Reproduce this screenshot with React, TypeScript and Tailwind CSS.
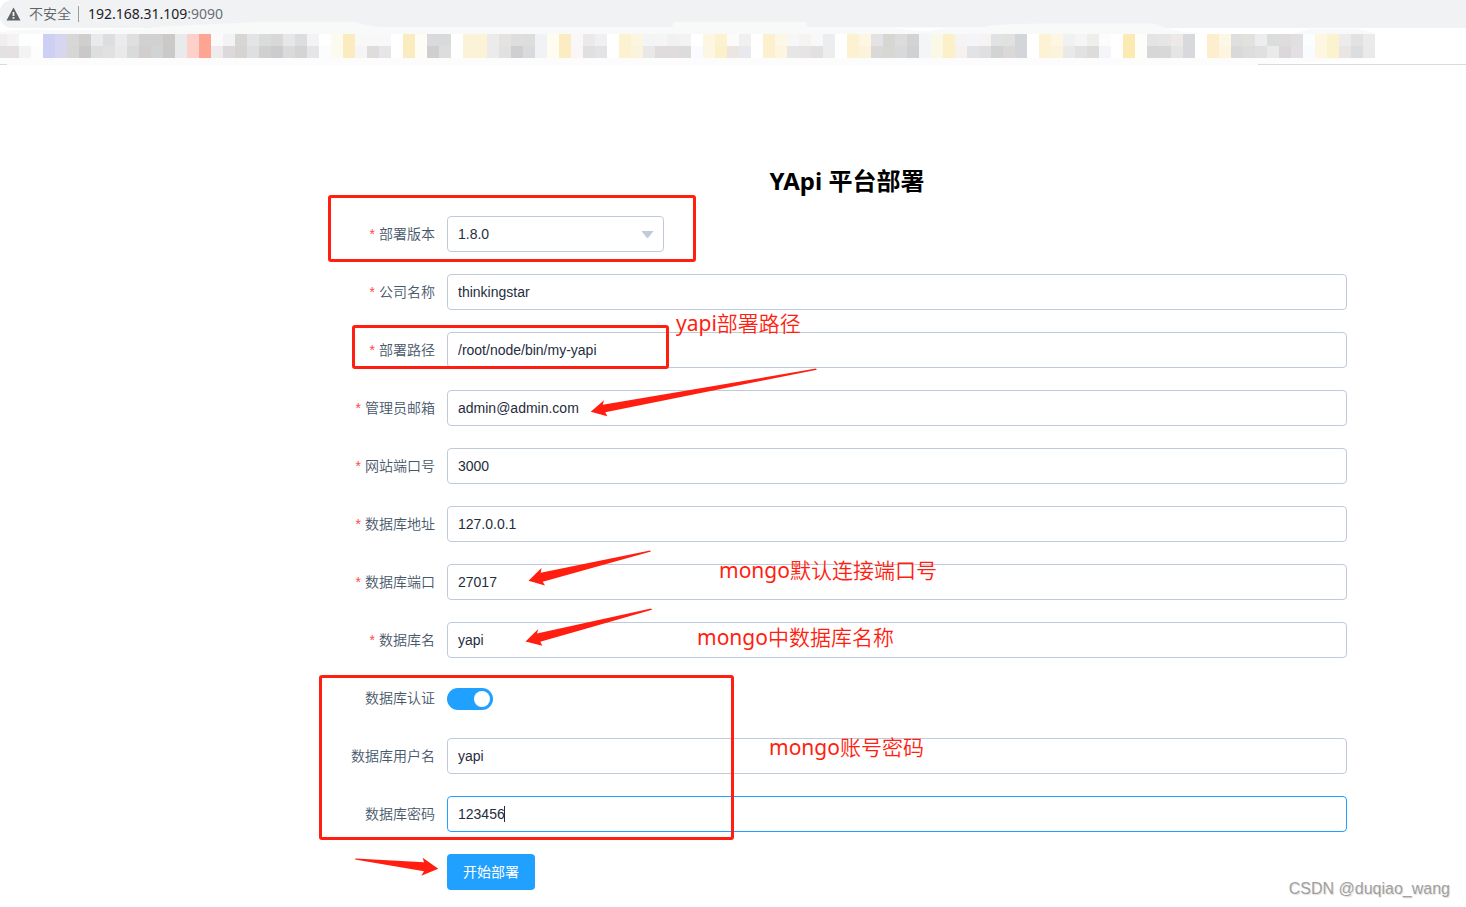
import React, { useState } from 'react';

type Field = {
  id: string;
  label: string;
  value: string;
  required?: boolean;
  active?: boolean;
};

const siteFields: Field[] = [
  { id: 'company', label: '公司名称', value: 'thinkingstar', required: true },
  { id: 'root', label: '部署路径', value: '/root/node/bin/my-yapi', required: true },
  { id: 'email', label: '管理员邮箱', value: 'admin@admin.com', required: true },
  { id: 'port', label: '网站端口号', value: '3000', required: true },
  { id: 'dbHost', label: '数据库地址', value: '127.0.0.1', required: true },
  { id: 'dbPort', label: '数据库端口', value: '27017', required: true },
  { id: 'dbName', label: '数据库名', value: 'yapi', required: true },
];

const authFields: Field[] = [
  { id: 'dbUser', label: '数据库用户名', value: 'yapi' },
  { id: 'dbPass', label: '数据库密码', value: '123456', active: true },
];

// Pixelated bookmarks, one "top/bottom" pair per 12px column
const mosaic = (
  'f0eeee/e2e2e4 f5f3f4/e5e1e3 fdfffe/f2f4f3 ffffff/fdfdfd cdd0f2/cdd0f2 d7d6f0/d7d6f0 d7d7d5/d6d6d4 d1cfcd/cac8c9 ' +
  'e9eaec/dddee0 dedede/e1e1e1 ebebed/e9e9e9 dfdfdf/dadada d2d1d1/d2cecd d1d1d1/d2d3d5 cbcac8/cac9c7 e9eaec/e9eaec ' +
  'fdd0ca/fdd0ca fda592/fda592 fafafa/eeebed f3f2f5/ddd8db d8d6d5/d5d4d2 e3e4e6/dedfe1 dadcdb/d0d0ce d8d8d8/cbccce ' +
  'e6e7e9/dadada dddddd/d3d4d6 f3f2f6/e5e5e7 ffffff/fcfcfe fdfbf0/fdfbf0 fbecc0/fbecc0 f8f8f8/f5f5f5 f8f8f8/dfdddc ' +
  'f8f8fa/e6e6e8 ffffff/ffffff fbecc0/fbecc0 fdfcf5/fdfcf5 dadadc/cfced1 d9dbda/dcdedd ffffff/ffffff fbf3d8/fbf3d8 ' +
  'fcf3d6/fcf3d6 ebebeb/ebebeb e4e3e1/e1e1df dddedd/cfcfd1 dddddb/d9dadc f0f2f5/f0f2f5 fefbf0/fefbf0 fbecc2/fbecc2 ' +
  'f8f8fa/f9f6f5 ebe9ea/e0e0e0 f0eff1/e3e2e5 ffffff/ffffff fcf2d2/fcf2d2 fcf5df/fbf4dc f3f4f4/e8e8e8 f5f5f5/e0dcdd ' +
  'f0f2f2/e0dcdd f3f3f3/dcdcdc ffffff/f9fbfe fcf6e2/fcf6e2 fcf2d0/fbf0c9 fbfbfb/ece6e2 f0f0f0/e8e8ee ffffff/ffffff ' +
  'fdf0cf/fdf0cf fcf8e6/fdf5e0 f8f7f8/e7e6e6 f5f4f3/e6e4e5 f8f8f8/e0e1e0 ecedef/ecedef ffffff/ffffff fcf2d2/fcf2d2 ' +
  'fdf6e3/fbf3dc e4e2e4/dad9d7 d6d6d3/d7d7d4 dcdcdc/d8d9db d3d3d5/d0d1d3 f3f5f7/f3f5f7 fcf8e8/fcf8e8 fbf0c8/fbf0c8 ' +
  'f5f4f4/f6f1ef f4f5f8/e1e3e5 f6f3f2/e0dee0 e0e2e3/d2d4d3 e1e2df/dad9d8 d4d5d9/d4d5d9 ffffff/ffffff fdf2d3/fdf2d3 ' +
  'fdf6e3/fbf4dc f0f2f1/e9e9e7 f5f5f5/e2e2e5 eeeeed/dddcda fcfcfc/f3f5f8 ffffff/ffffff fceab3/fceab3 fdfdf9/fdfdf9 ' +
  'e4e4e4/d8d6d9 e6e6e5/d8d8d8 ece9e8/e5e5e3 d8d9dc/d8d9dc ffffff/ffffff fdefce/fdefce fcf8e8/fdf5e0 dfdfdf/d9d9d9 ' +
  'e1e1de/dddddb ededef/e0e0e0 dadddc/e9eaea dfdcde/dbd7db e0dfe2/e2e0e2 fcfefe/f9fcfe fdf6e0/fdf6e0 fbf2cf/fbf2cf ' +
  'ececed/e8e5e3 e1e2e1/dbdde0 ebebeb/eaeae9'
).split(' ');

const BrowserBar: React.FC = () => (
  <header className="relative h-[65px]">
    <div className="flex h-7 items-center rounded-l-xl bg-[#f1f2f4] pl-1.5 text-sm text-[#5f6368]">
      <svg width="15" height="14" viewBox="0 0 15 14" aria-hidden="true">
        <path d="M7.500.5 14.500 13.500H.5Z" fill="#5f6368" />
        <path d="M6.600 5h1.800v4H6.600ZM6.600 10h1.800v1.700H6.600Z" fill="#f1f2f4" />
      </svg>
      <span className="ml-2 font-[350]">不安全</span>
      <span className="ml-[7px] h-4 w-px bg-[#9a9da1]" />
      <span className="ml-[9px] text-[#202124]">
        192.168.31.109<span className="text-[#6b6f74]">:9090</span>
      </span>
    </div>
    <svg className="absolute inset-0 h-full w-full" aria-hidden="true">
      <path
        d="M0 34V32Q30 28 50 30L140 29Q160 26 190 25L260 22H355Q368 26 380 27H672L674 22H805L808 27H985Q990 24 1040 23.500H1155Q1165 29 1185 32L1205 34H1290L1310 29H1360L1378 34Z"
        fill="#f8faf9"
      />
      <path d="M894 28H946Q925 33 910 30Z" fill="#fff" />
      <path d="M0 58H1375L1320 62 1260 64 1230 70H0Z" fill="#fcfcfc" />
      <path d="M1258 64.500H4000M0 64.500H7" stroke="#d9dadc" />
      {mosaic.map((pair, i) => {
        const [top, bottom] = pair.split('/');
        return (
          <g key={i} shapeRendering="crispEdges">
            <rect x={i * 12 - 5} y="34" width="12" height="12" fill={`#${top}`} />
            <rect x={i * 12 - 5} y="46" width="12" height="12" fill={`#${bottom}`} />
          </g>
        );
      })}
    </svg>
  </header>
);

const FormRow: React.FC<{
  id: string;
  label: string;
  required?: boolean;
  children: React.ReactNode;
}> = ({ id, label, required, children }) => (
  <div className="flex h-9">
    <label
      htmlFor={id}
      className="w-[100px] shrink-0 pr-3 text-right text-sm leading-9 font-[350] text-[#48576a]"
    >
      {required && (
        <span className="mr-1 font-['Liberation_Sans',sans-serif] text-[#ff4949]">*</span>
      )}
      {label}
    </label>
    <div className="relative min-w-0 flex-1">{children}</div>
  </div>
);

const TextRow: React.FC<{ field: Field }> = ({ field }) => (
  <FormRow id={field.id} label={field.label} required={field.required}>
    <input
      id={field.id}
      type="text"
      defaultValue={field.value}
      className={`h-9 w-full rounded border bg-white px-2.5 font-['Liberation_Sans',sans-serif] text-sm text-[#1f2d3d] outline-none ${
        field.active ? 'border-[#20a0ff]' : 'border-[#bfcbd9]'
      }`}
    />
    {field.active && (
      <span className="absolute left-[57px] top-2.5 h-4 w-px bg-[#1f2d3d]" />
    )}
  </FormRow>
);

const Annotations: React.FC = () => (
  <div className="pointer-events-none absolute left-0 top-0 text-[21px] leading-7 text-[#ff1e10]">
    <div className="absolute left-[328px] top-[195px] h-[67px] w-[368px] rounded-[3px] border-3 border-[#ff1e10]" />
    <div className="absolute left-[352px] top-[325px] h-[44px] w-[317px] rounded-[3px] border-3 border-[#ff1e10]" />
    <div className="absolute left-[319px] top-[675px] h-[165px] w-[415px] rounded-[3px] border-3 border-[#ff1e10]" />
    <span className="absolute left-[676px] top-[309px] whitespace-nowrap">
      yapi<span className="font-[350]">部署路径</span>
    </span>
    <span className="absolute left-[719px] top-[556px] whitespace-nowrap">
      mongo<span className="font-[350]">默认连接端口号</span>
    </span>
    <span className="absolute left-[697px] top-[623px] whitespace-nowrap">
      mongo<span className="font-[350]">中数据库名称</span>
    </span>
    <span className="absolute left-[769px] top-[733px] whitespace-nowrap">
      mongo<span className="font-[350]">账号密码</span>
    </span>
    <svg className="absolute left-0 top-0" width="860" height="900" fill="#ff1e10" aria-hidden="true">
      <path d="M590.700 411.700 604 400.300 602.700 404.700 816 368.600 816.800 369.700 605.300 412.300 607.300 416.300Z" />
      <path d="M528.500 580.700 541.500 568 540.700 572.700 650 550.500 651 551.500 542.700 581.700 545 585.500Z" />
      <path d="M525.500 641.500 538.300 629 537 633.500 651 608.500 652 609.700 540.300 641.700 542.300 645.700Z" />
      <path d="M438.300 868.700 422.700 857.700 424 862.300 355.500 858.400 355 859.500 424 871.300 421.300 875.700Z" />
    </svg>
  </div>
);

const App: React.FC = () => {
  const [auth, setAuth] = useState<boolean>(true);

  return (
    <div className="relative min-h-screen bg-white font-['Noto_Sans','Noto_Sans_CJK_SC',sans-serif]">
      <BrowserBar />
      <main className="pb-4 pl-[347px] pr-[119px] pt-[98px]">
        <h1 className="mb-[17px] text-center text-2xl leading-9 font-bold text-black">
          YApi 平台部署
        </h1>
        <form className="flex flex-col gap-[22px]" onSubmit={(e) => e.preventDefault()}>
          <FormRow id="version" label="部署版本" required>
            <div className="relative w-[217px]">
              <select
                id="version"
                defaultValue="1.8.0"
                className="h-9 w-full appearance-none rounded border border-[#bfcbd9] bg-white px-2.5 font-['Liberation_Sans',sans-serif] text-sm text-[#1f2d3d] outline-none"
              >
                <option>1.8.0</option>
              </select>
              <svg
                className="pointer-events-none absolute right-2.5 top-[15px]"
                width="13"
                height="7"
                viewBox="0 0 13 7"
                aria-hidden="true"
              >
                <path d="M.5 0h12L7.500 6.500q-1 .8-2 0Z" fill="#bfcbd9" />
              </svg>
            </div>
          </FormRow>

          {siteFields.map((field) => (
            <TextRow key={field.id} field={field} />
          ))}

          <FormRow id="auth" label="数据库认证">
            <div className="relative mt-2 h-[22px] w-[46px]">
              <input
                id="auth"
                type="checkbox"
                role="switch"
                checked={auth}
                onChange={(e) => setAuth(e.target.checked)}
                className="peer block h-full w-full cursor-pointer appearance-none rounded-full bg-[#bfcbd9] checked:bg-[#20a0ff]"
              />
              <span className="pointer-events-none absolute left-[3px] top-[3px] size-4 rounded-full bg-white peer-checked:left-[27px]" />
            </div>
          </FormRow>

          {auth && authFields.map((field) => <TextRow key={field.id} field={field} />)}

          <div className="flex pl-[100px]">
            <button
              type="submit"
              className="h-9 rounded bg-[#20a0ff] px-4 text-sm text-white hover:bg-[#4db3ff]"
            >
              开始部署
            </button>
          </div>
        </form>
      </main>
      <Annotations />
      <div className="absolute bottom-1.5 right-4 font-['Liberation_Sans',sans-serif] text-base leading-6 text-[#a0a0a0] text-shadow-[1px_1px_1px_#ddd]">
        CSDN @duqiao_wang
      </div>
    </div>
  );
};

export default App;
